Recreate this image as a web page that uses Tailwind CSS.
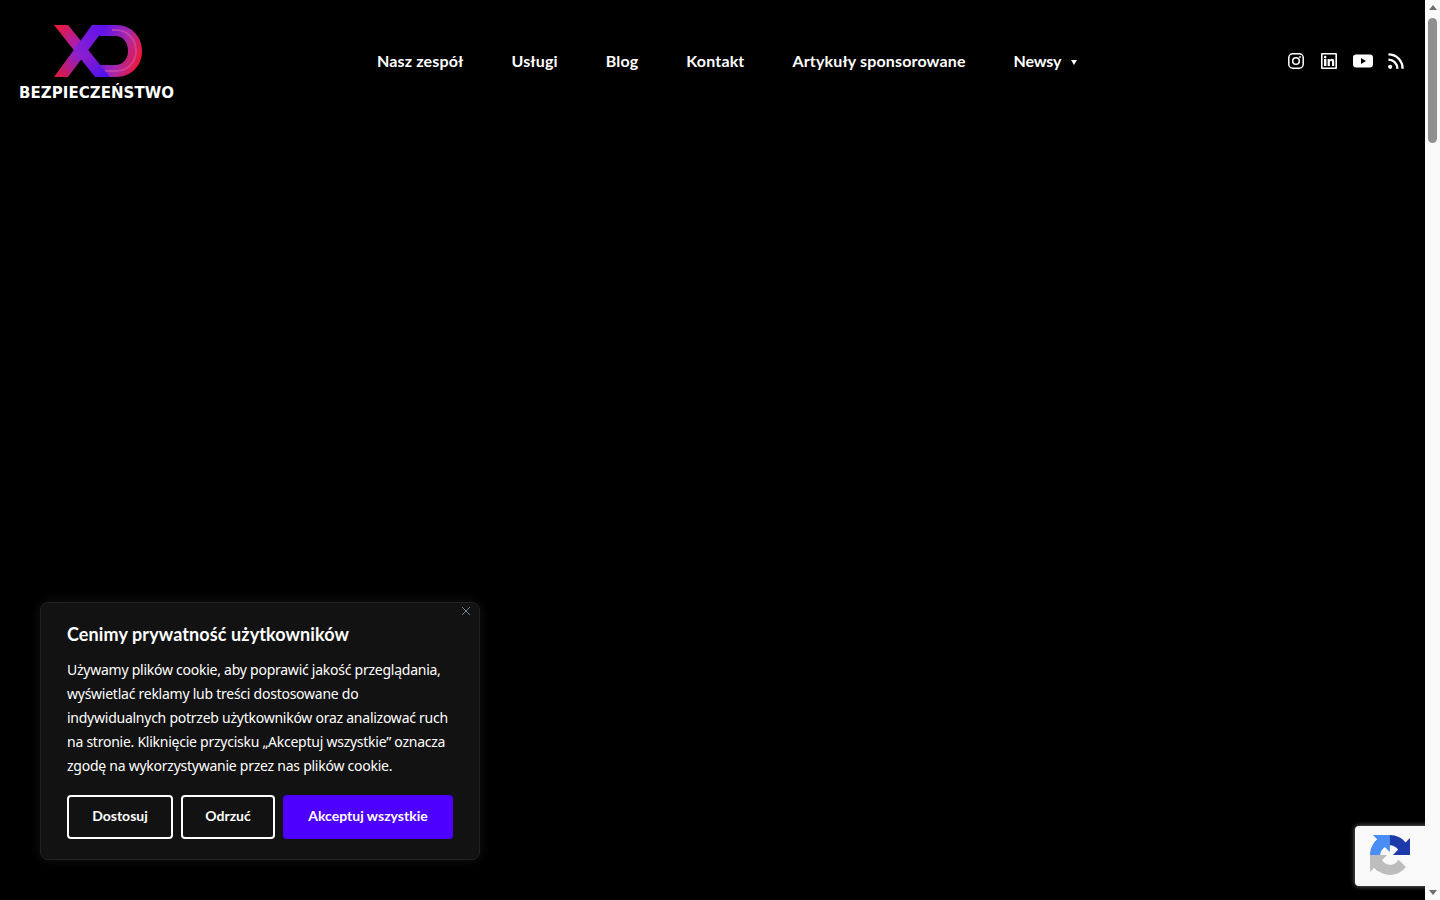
<!DOCTYPE html>
<html lang="pl">

<head>
  <meta charset="UTF-8">
  <meta name="viewport" content="width=device-width, initial-scale=1.0">
  <title>XD Bezpieczeństwo</title>
  <script src="https://cdn.jsdelivr.net/npm/@tailwindcss/browser@4"></script>
</head>

<body class="bg-black h-screen overflow-hidden flex font-['Noto_Sans',sans-serif] text-white">
  <div class="relative flex-1 h-full overflow-hidden bg-black">
    <!-- Header -->
    <header class="flex items-center h-[122px] pl-[19px] pr-[21px]">
      <div class="w-[156px] shrink-0 flex flex-col mt-[5px]">
        <svg class="w-[156px] h-[62px]" viewBox="19 24 156 62">
          <defs>
            <linearGradient id="xa" x1="54" y1="25" x2="107" y2="77" gradientUnits="userSpaceOnUse">
              <stop offset="0" stop-color="#f0182e" />
              <stop offset="0.45" stop-color="#a020c0" />
              <stop offset="1" stop-color="#4a10f0" />
            </linearGradient>
            <linearGradient id="xb" x1="54" y1="78" x2="108" y2="25" gradientUnits="userSpaceOnUse">
              <stop offset="0" stop-color="#e8182e" />
              <stop offset="0.45" stop-color="#8a20d0" />
              <stop offset="1" stop-color="#5a10f0" />
            </linearGradient>
            <linearGradient id="xd" x1="100" y1="40" x2="142" y2="55" gradientUnits="userSpaceOnUse">
              <stop offset="0" stop-color="#6014e8" />
              <stop offset="0.55" stop-color="#a828a8" />
              <stop offset="1" stop-color="#f01838" />
            </linearGradient>
          </defs>
          <path fill="url(#xd)" fill-rule="evenodd" d="M92 25H116C131 25 142 36 142 51C142 66 131 77 116 77H99L90 65H115C123 65 128 59 128 51C128 42 123 36 115 36H100Z" />
          <path fill="none" stroke="#d858b0" stroke-opacity="0.55" stroke-width="2" d="M112 30H116C127 30 136 39 136 51C136 62 128 71 116 71H104" />
          <path fill="url(#xa)" d="M54 25H68L110 77H95Z" />
          <path fill="url(#xb)" d="M54 77H68L107 25H92Z" />
        </svg>
        <span class="font-['DejaVu_Sans',sans-serif] text-[15px] leading-[16px] font-semibold tracking-[0.05px] mt-[-1px] mb-[2px] whitespace-nowrap">BEZPIECZEŃSTWO</span>
      </div>

      <nav class="flex items-center gap-12 ml-[202px] text-base font-bold tracking-[0.15px] font-['Lato',sans-serif]">
        <a href="#">Nasz zespół</a>
        <a href="#">Usługi</a>
        <a href="#">Blog</a>
        <a href="#">Kontakt</a>
        <a href="#">Artykuły sponsorowane</a>
        <a href="#" class="flex items-center gap-[10px] tracking-[-0.2px]">Newsy
          <span class="w-0 h-0 border-x-[3.5px] border-x-transparent border-t-[5px] border-t-white mt-[2px]"></span>
        </a>
      </nav>

      <div class="flex items-center gap-4 ml-auto">
        <!-- Instagram -->
        <svg class="w-4 h-4" viewBox="0 0 16 16" fill="none" stroke="white" stroke-width="1.5">
          <rect x="0.8" y="0.8" width="14.4" height="14.4" rx="4" />
          <circle cx="8" cy="8" r="3.3" />
          <circle cx="12" cy="4" r="0.9" fill="white" stroke="none" />
        </svg>
        <!-- LinkedIn -->
        <svg class="w-4 h-4 ml-px" viewBox="0 0 16 16">
          <path fill="white" fill-rule="evenodd" d="M1 0H15A1 1 0 0 1 16 1V15A1 1 0 0 1 15 16H1A1 1 0 0 1 0 15V1A1 1 0 0 1 1 0ZM1.6 1.6V14.4H14.4V1.6Z" />
          <path fill="white" d="M3 6H5.4V13H3ZM4.2 2.8A1.3 1.3 0 1 1 4.2 5.4A1.3 1.3 0 1 1 4.2 2.8ZM6.6 6H8.8V7C9.2 6.4 9.9 5.8 11 5.8C12.8 5.8 13.2 7 13.2 8.8V13H11V9.5C11 8.6 10.8 7.8 10 7.8C9.2 7.8 8.9 8.5 8.9 9.5V13H6.6Z" />
        </svg>
        <!-- YouTube -->
        <svg class="w-5 h-4" viewBox="0 0 20 16">
          <path fill="white" fill-rule="evenodd" d="M3 1.4H17C18.7 1.4 20 2.7 20 4.4V11.6C20 13.3 18.7 14.6 17 14.6H3C1.3 14.6 0 13.3 0 11.6V4.4C0 2.7 1.3 1.4 3 1.4ZM8 5V11L13 8Z" />
        </svg>
        <!-- RSS -->
        <svg class="w-4 h-4 ml-[-1px]" viewBox="0 0 16 16" fill="none" stroke="white" stroke-width="2.4">
          <circle cx="2.2" cy="13.8" r="2.1" fill="white" stroke="none" />
          <path d="M0.4 6.6C5.4 6.6 9.4 10.6 9.4 15.8" />
          <path d="M0.4 1.4C8.4 1.4 14.6 7.6 14.6 15.8" />
        </svg>
      </div>
    </header>

    <!-- Cookie banner -->
    <div class="absolute left-10 top-[602px] w-[440px] h-[258px] bg-[#121212] border border-[#222222] rounded-lg shadow-[0_0_12px_rgba(255,255,255,0.08)] px-[26px] pt-[19px]">
      <button class="absolute right-[7px] top-[2px] text-[#6b8496]">
        <svg class="w-3 h-3" viewBox="0 0 12 12" fill="none" stroke="currentColor" stroke-width="1">
          <path d="M2 2L10 10M10 2L2 10" />
        </svg>
      </button>
      <h2 class="text-lg leading-6 font-bold tracking-[0.1px] font-['Lato',sans-serif]">Cenimy prywatność użytkowników</h2>
      <p class="mt-3 text-sm leading-6 w-[390px] tracking-[-0.25px]">Używamy plików cookie, aby poprawić jakość przeglądania, wyświetlać reklamy lub treści dostosowane do indywidualnych potrzeb użytkowników oraz analizować ruch na stronie. Kliknięcie przycisku „Akceptuj wszystkie” oznacza zgodę na wykorzystywanie przez nas plików cookie.</p>
      <div class="flex gap-2 mt-[17px] text-sm font-bold font-['Lato',sans-serif]">
        <button class="w-[106px] h-11 pb-[2px] border-2 border-white rounded-sm">Dostosuj</button>
        <button class="w-[94px] h-11 pb-[2px] border-2 border-white rounded-sm">Odrzuć</button>
        <button class="w-[170px] h-11 pb-[2px] bg-[#4e00ff] rounded-sm">Akceptuj wszystkie</button>
      </div>
    </div>

    <!-- reCAPTCHA badge -->
    <div class="absolute left-[1355px] top-[826px] w-[256px] h-[60px] bg-[#f9f9f9] rounded-sm shadow-[0_0_5px_rgba(128,128,128,1)]">
      <svg class="absolute left-[15px] top-[9px] w-10 h-10" viewBox="0 0 64 64">
        <path fill="#1c3aa9" d="M64 31.955l-.033-1.37V4.687l-7.16 7.16C50.948 4.674 42.033.093 32.05.093c-10.4 0-19.622 4.96-25.458 12.64l11.736 11.86a15.55 15.55 0 0 1 4.754-5.334c2.05-1.6 4.952-2.906 8.968-2.906.485 0 .86.057 1.135.163 4.976.393 9.29 3.14 11.83 7.124l-8.307 8.307L64 31.953" />
        <path fill="#4a8ef5" d="M31.862.094l-1.37.033H4.594l7.16 7.16C4.58 13.147 0 22.06 0 32.046c0 10.4 4.96 19.622 12.64 25.458L24.5 45.768a15.55 15.55 0 0 1-5.334-4.754c-1.6-2.05-2.906-4.952-2.906-8.968 0-.485.057-.86.163-1.135.393-4.976 3.14-9.29 7.124-11.83l8.307 8.307L31.86.094" />
        <path fill="#bdbdbd" d="M.001 32.045l.033 1.37v25.898l7.16-7.16c5.86 7.173 14.774 11.754 24.76 11.754 10.4 0 19.622-4.96 25.458-12.64l-11.736-11.86a15.55 15.55 0 0 1-4.754 5.334c-2.04 1.6-4.95 2.906-8.968 2.906-.484 0-.86-.057-1.135-.163-4.976-.393-9.29-3.14-11.83-7.124l8.307-8.307c-10.522.04-22.4.066-28.296-.008" />
      </svg>
    </div>
  </div>

  <!-- Scrollbar -->
  <div class="w-[15px] h-full shrink-0 bg-[#fafafa] flex flex-col items-center">
    <span class="mt-[5px] w-0 h-0 border-x-[4.5px] border-x-transparent border-b-[5px] border-b-[#6e6e6e]"></span>
    <span class="mt-[8px] w-[9px] h-[125px] rounded-full bg-[#8f8f8f]"></span>
    <span class="mt-auto mb-[5px] w-0 h-0 border-x-[4.5px] border-x-transparent border-t-[5px] border-t-[#6e6e6e]"></span>
  </div>
</body>

</html>
